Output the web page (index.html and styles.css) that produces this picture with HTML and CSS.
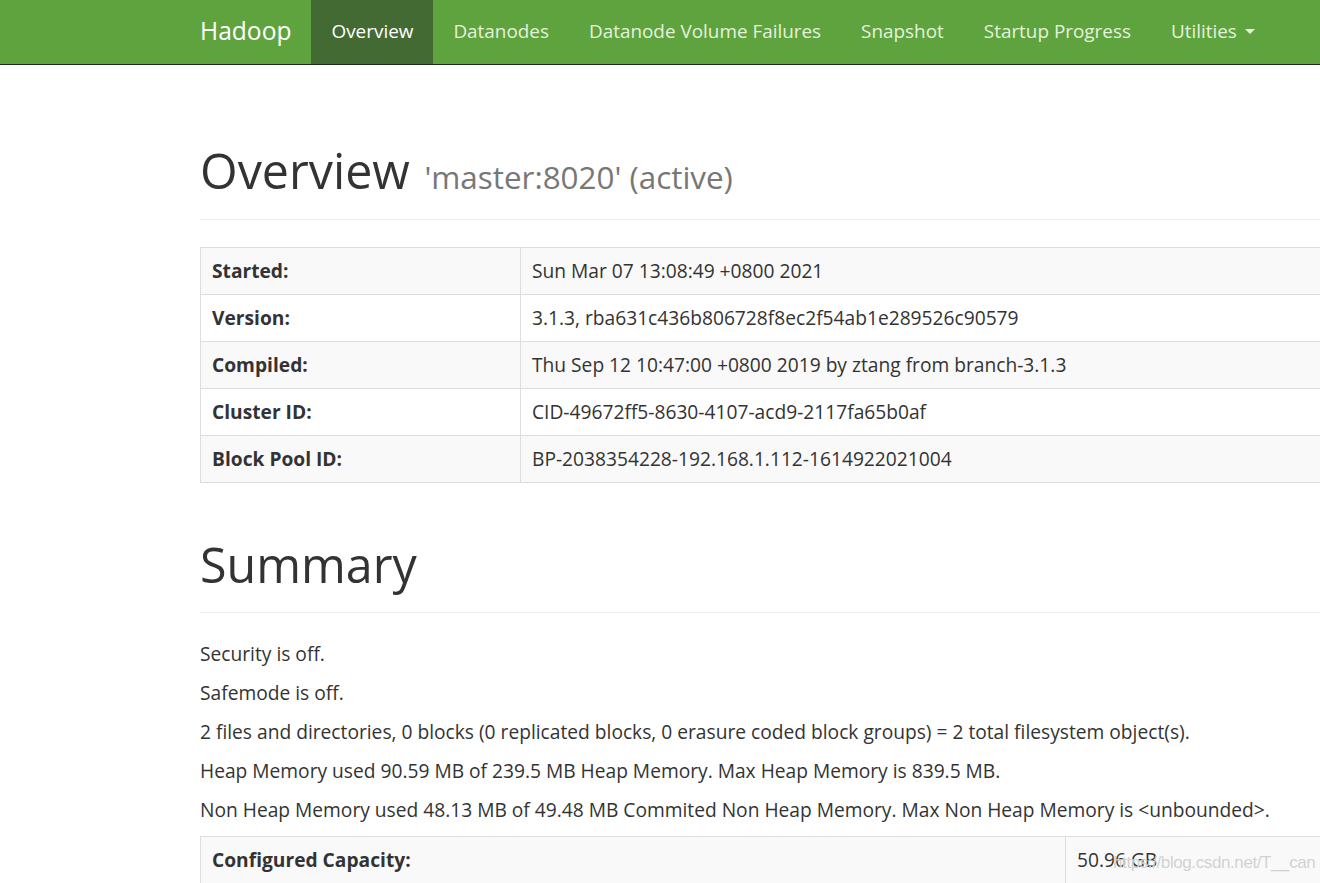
FILE: index.html
```html
<!DOCTYPE html>
<html>
<head>
<meta charset="utf-8">
<title>Namenode information</title>
<link rel="stylesheet" href="styles.css">
</head>
<body>
<header class="navbar">
  <div class="navbar-inner">
    <a class="brand" href="#">Hadoop</a>
    <ul class="nav">
      <li class="active"><a href="#">Overview</a></li>
      <li><a href="#">Datanodes</a></li>
      <li><a href="#">Datanode Volume Failures</a></li>
      <li><a href="#">Snapshot</a></li>
      <li><a href="#">Startup Progress</a></li>
      <li><a href="#">Utilities <span class="caret"></span></a></li>
    </ul>
  </div>
</header>

<main class="container">
  <div class="page-header first">
    <h1>Overview <small>'master:8020' (active)</small></h1>
  </div>

  <table class="table table-overview">
    <tr><th>Started:</th><td>Sun Mar 07 13:08:49 +0800 2021</td></tr>
    <tr><th>Version:</th><td>3.1.3, rba631c436b806728f8ec2f54ab1e289526c90579</td></tr>
    <tr><th>Compiled:</th><td>Thu Sep 12 10:47:00 +0800 2019 by ztang from branch-3.1.3</td></tr>
    <tr><th>Cluster ID:</th><td>CID-49672ff5-8630-4107-acd9-2117fa65b0af</td></tr>
    <tr><th>Block Pool ID:</th><td>BP-2038354228-192.168.1.112-1614922021004</td></tr>
  </table>

  <div class="page-header second">
    <h1>Summary</h1>
  </div>

  <p>Security is off.</p>
  <p>Safemode is off.</p>
  <p>2 files and directories, 0 blocks (0 replicated blocks, 0 erasure coded block groups) = 2 total filesystem object(s).</p>
  <p>Heap Memory used 90.59 MB of 239.5 MB Heap Memory. Max Heap Memory is 839.5 MB.</p>
  <p>Non Heap Memory used 48.13 MB of 49.48 MB Commited Non Heap Memory. Max Non Heap Memory is &lt;unbounded&gt;.</p>

  <table class="table table-summary">
    <tr><th>Configured Capacity:</th><td>50.96 GB</td></tr>
  </table>
</main>

<div class="watermark">https://blog.csdn.net/T__can</div>
</body>
</html>
```

FILE: styles.css
```css
html, body {
  margin: 0;
  padding: 0;
  overflow: hidden;
  background: #fff;
}

body {
  font-family: "Open Sans", "Noto Sans", sans-serif;
  font-size: 19.2px;
  line-height: 26px;
  color: #333;
  width: 1320px;
  height: 883px;
  position: relative;
}

a { text-decoration: none; }

/* ---------- navbar ---------- */
.navbar {
  background: #5fa33e;
  height: 64px;
  border-bottom: 1px solid #1d2a14;
}

.navbar-inner {
  display: flex;
  align-items: stretch;
  height: 64px;
  margin-left: 200px;
}

.brand {
  display: flex;
  align-items: center;
  color: #fff;
  font-size: 24.6px;
  padding-right: 20px;
  padding-bottom: 3px;
}

.nav {
  display: flex;
  list-style: none;
  margin: 0;
  padding: 0;
}

.nav li a {
  display: flex;
  align-items: center;
  height: 64px;
  padding: 0 20px 3px;
  color: #e4f2dc;
  font-size: 18.9px;
  white-space: nowrap;
  box-sizing: border-box;
}

.nav li.active a {
  background: #446a34;
  color: #fff;
}

.caret {
  display: inline-block;
  width: 0;
  height: 0;
  margin-left: 8px;
  margin-top: 2px;
  border-top: 5px solid #e4f2dc;
  border-left: 5px solid transparent;
  border-right: 5px solid transparent;
}

/* ---------- content ---------- */
.container {
  margin-left: 200px;
  width: 1200px;
}

.page-header {
  border-bottom: 1px solid #eee;
}

.page-header.first {
  margin-top: 79px;
  padding-bottom: 23px;
  margin-bottom: 27px;
}

.page-header.second {
  margin-top: 55px;
  padding-bottom: 22px;
  margin-bottom: 28px;
}

h1 {
  margin: 0;
  font-size: 48.4px;
  line-height: 52px;
  font-weight: 400;
  color: #333;
}

h1 small {
  font-size: 31.4px;
  line-height: 1;
  color: #777;
  margin-left: 2px;
}

p {
  margin: 0 0 13px;
}

/* ---------- tables ---------- */
.table {
  border-collapse: collapse;
  width: 1200px;
  border: 1px solid #ddd;
}

.table th,
.table td {
  border: 1px solid #ddd;
  padding: 10px 11px;
  height: 26px;
  text-align: left;
  vertical-align: middle;
  white-space: nowrap;
}

.table th {
  font-weight: 700;
}

.table tr:nth-child(odd) {
  background: #f9f9f9;
}

.table-overview th { width: 297px; }
.table-summary th { width: 842px; }

/* ---------- watermark overlay ---------- */
.watermark {
  position: absolute;
  left: 1113px;
  top: 850px;
  font-family: "Liberation Sans", Arial, sans-serif;
  font-size: 17px;
  letter-spacing: -0.4px;
  color: rgba(200, 200, 200, 0.85);
  text-shadow: 0 0 1px rgba(255, 255, 255, 0.9);
  white-space: nowrap;
}
```
